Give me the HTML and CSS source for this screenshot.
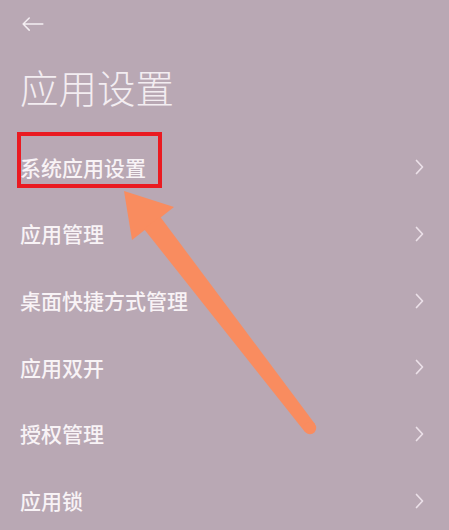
FILE: index.html
```html
<!DOCTYPE html>
<html lang="zh-CN">
<head>
<meta charset="utf-8">
<link rel="stylesheet" href="styles.css">
</head>
<body>
<div class="screen">
  <header class="topbar">
    <svg class="back" viewBox="0 0 24 16" width="23" height="15" aria-hidden="true">
      <path d="M23 7.5 H2 M8.5 1 L2 7.5 L8.5 14" fill="none" stroke="currentColor" stroke-width="1.6" stroke-linecap="round" stroke-linejoin="round"/>
    </svg>
  </header>
  <h1 class="title">应用设置</h1>
  <ul class="list">
    <li class="row"><span class="label">系统应用设置</span><svg class="chev" viewBox="0 0 9 16" width="9" height="16"><path d="M1.5 1.5 L7.5 8 L1.5 14.5" fill="none" stroke="currentColor" stroke-width="1.7" stroke-linecap="round" stroke-linejoin="round"/></svg></li>
    <li class="row"><span class="label">应用管理</span><svg class="chev" viewBox="0 0 9 16" width="9" height="16"><path d="M1.5 1.5 L7.5 8 L1.5 14.5" fill="none" stroke="currentColor" stroke-width="1.7" stroke-linecap="round" stroke-linejoin="round"/></svg></li>
    <li class="row"><span class="label">桌面快捷方式管理</span><svg class="chev" viewBox="0 0 9 16" width="9" height="16"><path d="M1.5 1.5 L7.5 8 L1.5 14.5" fill="none" stroke="currentColor" stroke-width="1.7" stroke-linecap="round" stroke-linejoin="round"/></svg></li>
    <li class="row"><span class="label">应用双开</span><svg class="chev" viewBox="0 0 9 16" width="9" height="16"><path d="M1.5 1.5 L7.5 8 L1.5 14.5" fill="none" stroke="currentColor" stroke-width="1.7" stroke-linecap="round" stroke-linejoin="round"/></svg></li>
    <li class="row"><span class="label">授权管理</span><svg class="chev" viewBox="0 0 9 16" width="9" height="16"><path d="M1.5 1.5 L7.5 8 L1.5 14.5" fill="none" stroke="currentColor" stroke-width="1.7" stroke-linecap="round" stroke-linejoin="round"/></svg></li>
    <li class="row"><span class="label">应用锁</span><svg class="chev" viewBox="0 0 9 16" width="9" height="16"><path d="M1.5 1.5 L7.5 8 L1.5 14.5" fill="none" stroke="currentColor" stroke-width="1.7" stroke-linecap="round" stroke-linejoin="round"/></svg></li>
  </ul>
  <div class="highlight"></div>
  <svg class="pointer" viewBox="0 0 449 530" width="449" height="530" aria-hidden="true">
    <g fill="#f98c5f">
      <polygon points="124,191 174,207 132,240"/>
      <polygon points="144,229 160,216.5 315,424 305,432"/>
      <circle cx="310" cy="428" r="6.2"/>
    </g>
  </svg>
</div>
</body>
</html>
```

FILE: styles.css
```css
html, body {
  margin: 0;
  padding: 0;
}

body {
  background: #b9a8b4;
  font-family: "Noto Sans CJK SC", "Noto Sans", sans-serif;
  color: #f7f1f5;
}

.screen {
  position: relative;
  width: 449px;
  height: 530px;
  overflow: hidden;
  background: #b9a8b4;
}

.topbar {
  height: 50px;
  padding: 17px 0 0 21px;
  box-sizing: border-box;
}

.back {
  display: block;
  color: #f4eef2;
}

.title {
  margin: 0 0 8px 0;
  padding-left: 20px;
  height: 76px;
  line-height: 72px;
  font-size: 38.5px;
  font-weight: 300;
  color: #f3edf1;
}

.list {
  list-style: none;
  margin: 0;
  padding: 0;
}

.row {
  height: 66.67px;
  display: flex;
  align-items: center;
  justify-content: space-between;
  padding: 0 25px 0 20px;
}

.label {
  font-size: 21px;
  font-weight: 500;
  line-height: 1;
  color: #f8f3f6;
}

.chev {
  display: block;
  color: #ebe0e8;
}

.highlight {
  position: absolute;
  left: 16.5px;
  top: 132px;
  width: 145px;
  height: 56px;
  box-sizing: border-box;
  border: 4px solid #ea1a21;
}

.pointer {
  position: absolute;
  left: 0;
  top: 0;
}
```
